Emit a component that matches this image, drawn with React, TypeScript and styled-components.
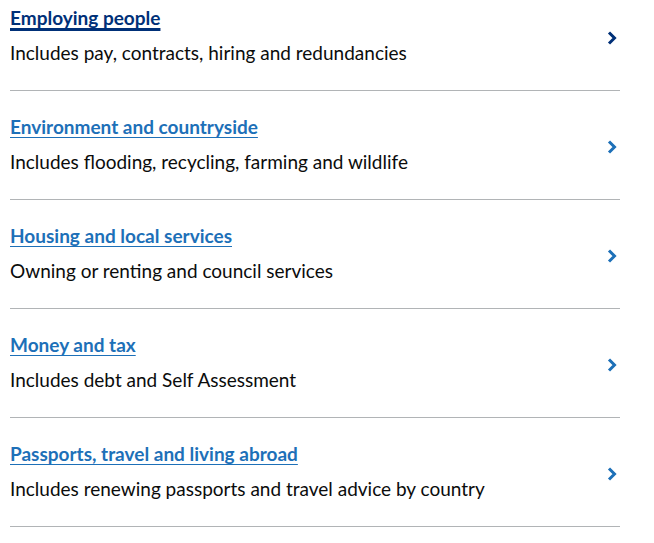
import React from "react";
import styled, { createGlobalStyle } from "styled-components";

const GlobalStyle = createGlobalStyle`
  body {
    margin: 0;
    background: #ffffff;
    font-family: Lato, "Liberation Sans", Arial, sans-serif;
    color: #0b0c0c;
  }
`;

//#region STYLES
const List = styled.ul`
  list-style: none;
  margin: -18px 0 0 10px;
  padding: 0;
  width: 610px;
`;
const Item = styled.li`
  display: flex;
  align-items: center;
  justify-content: space-between;
  padding: 23px 3px 25px 0;
  border-bottom: 1px solid #b1b4b6;
`;
const Text = styled.div`
  display: flex;
  flex-direction: column;
`;
const Title = styled.a<{ $hover?: boolean }>`
  align-self: flex-start;
  margin-bottom: 10px;
  font-size: 19px;
  line-height: 25px;
  font-weight: 700;
  color: ${(p) => (p.$hover ? "#003078" : "#1d70b8")};
  text-decoration: underline;
  text-decoration-thickness: ${(p) => (p.$hover ? "3px" : "1px")};
  text-underline-offset: 0.1578em;
`;
const Description = styled.p`
  margin: 0;
  font-size: 19px;
  line-height: 25px;
`;
const Chevron = styled.svg<{ $hover?: boolean }>`
  flex: none;
  width: 10px;
  height: 14px;
  margin-top: 6px;
  color: ${(p) => (p.$hover ? "#003078" : "#1d70b8")};
`;
//#endregion

const topics = [
  {
    title: "Employing people",
    text: "Includes pay, contracts, hiring and redundancies",
    hover: true,
  },
  {
    title: "Environment and countryside",
    text: "Includes flooding, recycling, farming and wildlife",
  },
  {
    title: "Housing and local services",
    text: "Owning or renting and council services",
  },
  {
    title: "Money and tax",
    text: "Includes debt and Self Assessment",
  },
  {
    title: "Passports, travel and living abroad",
    text: "Includes renewing passports and travel advice by country",
  },
];

const App = () => {
  return (
    <>
      <GlobalStyle />
      <List>
        {topics.map((t) => (
          <Item key={t.title}>
            <Text>
              <Title href="#" $hover={t.hover}>
                {t.title}
              </Title>
              <Description>{t.text}</Description>
            </Text>
            <Chevron $hover={t.hover} viewBox="0 0 10 14" aria-hidden="true">
              <polyline
                points="2,1.5 7.5,7 2,12.5"
                fill="none"
                stroke="currentColor"
                strokeWidth="3"
              />
            </Chevron>
          </Item>
        ))}
      </List>
    </>
  );
};

export default App;
